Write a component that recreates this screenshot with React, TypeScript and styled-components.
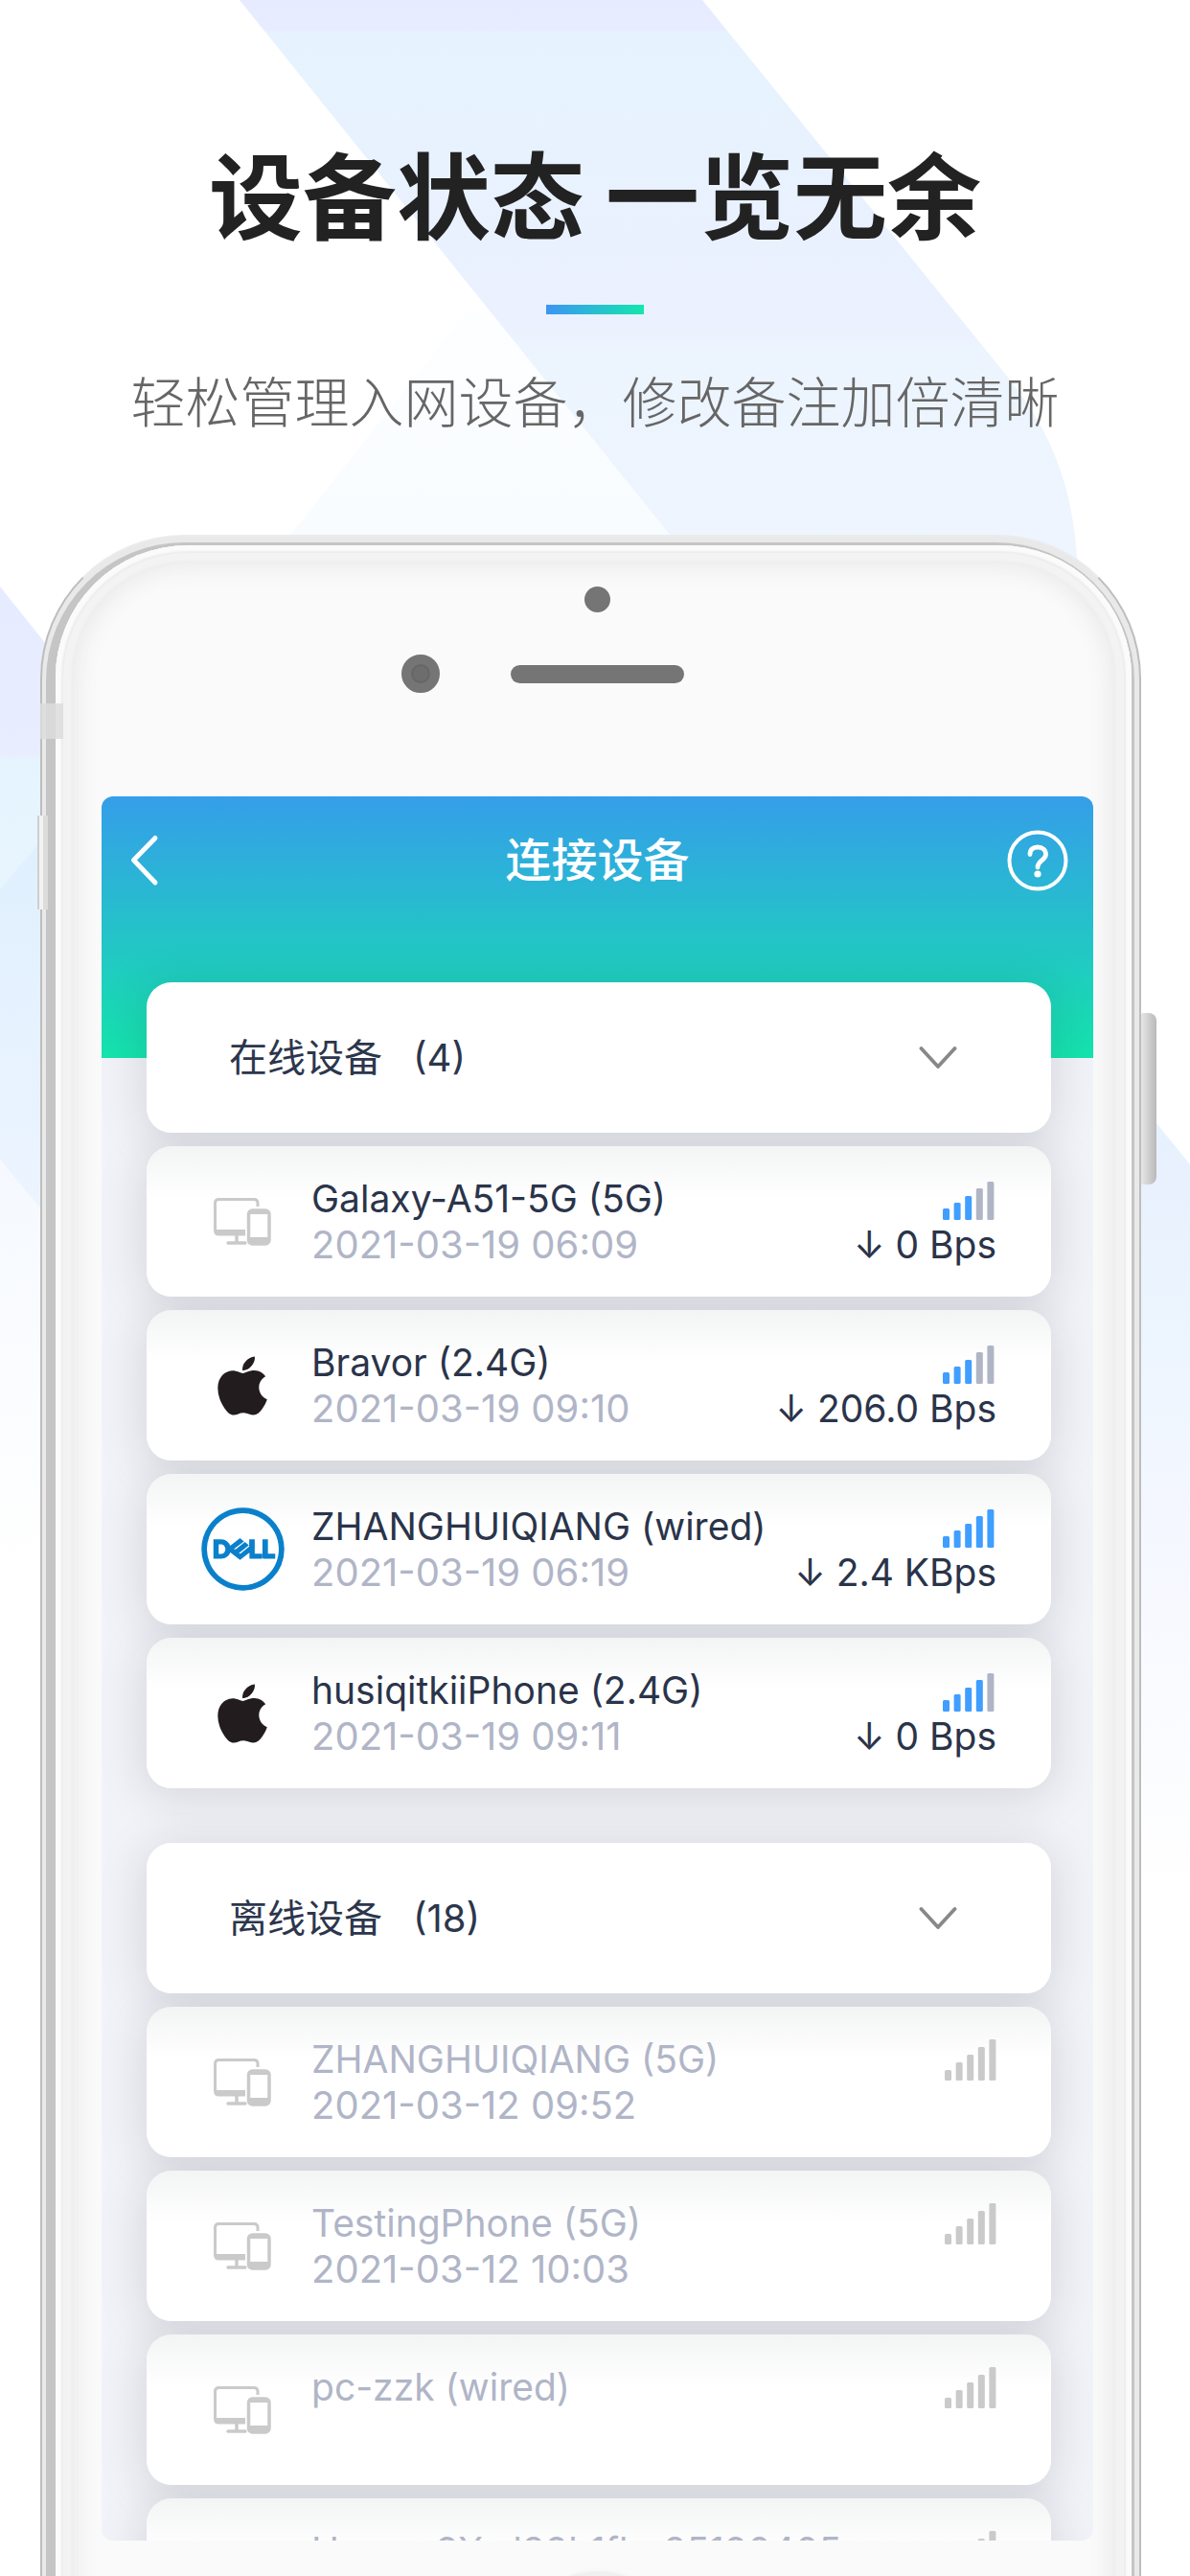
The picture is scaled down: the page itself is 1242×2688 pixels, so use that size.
import React, { useState } from "react";
import styled, { createGlobalStyle } from "styled-components";
import { FaApple } from "react-icons/fa";
import { SiDell, SiHuawei } from "react-icons/si";

const GlobalStyle = createGlobalStyle`
  * { box-sizing: border-box; }
  body { margin: 0; background: #fff; }
  button { border: 0; padding: 0; background: none; font: inherit; color: inherit; cursor: pointer; }
`;

const Page = styled.main`
  position: relative;
  isolation: isolate;
  display: flex;
  flex-direction: column;
  height: 100vh;
  overflow: hidden;
  font-family: Inter, "Noto Sans CJK SC", sans-serif;
`;

const Backdrop = styled.svg`
  position: absolute;
  inset: 0;
  width: 100%;
  height: 100%;
  z-index: -1;
`;

const Intro = styled.header`
  display: flex;
  flex-direction: column;
  align-items: center;
  padding: 127px 24px 101px;
  font-family: "Noto Sans CJK SC", sans-serif;
  text-align: center;
`;

const Headline = styled.h1`
  margin: 0;
  font-size: 98px;
  line-height: 144px;
  font-weight: 700;
  color: #222;
`;

const Accent = styled.div`
  width: 102px;
  height: 10px;
  margin: 47px 0;
  background: linear-gradient(90deg, #3d95f2, #14e6ae);
`;

const Tagline = styled.p`
  margin: 0;
  font-size: 57px;
  line-height: 82px;
  font-weight: 300;
  color: #666;
`;

const Phone = styled.section`
  position: relative;
  flex: 1;
  min-height: 0;
  display: flex;
  margin: 0 51px -200px 42px;
  padding: 6px 5px 0 4px;
  border: 2px solid #bdbdbd;
  border-top-color: #ebebeb;
  border-radius: 150px 150px 0 0;
  background: #e9e9e9;
`;

const Rim = styled.div`
  flex: 1;
  min-width: 0;
  display: flex;
  padding: 3px 3px 0 10px;
  border-radius: 144px 144px 0 0;
  background: #c5c5c5;
`;

const Face = styled.div`
  flex: 1;
  min-width: 0;
  display: flex;
  flex-direction: column;
  padding: 43px 40px 0 48px;
  border-radius: 138px 138px 0 0;
  background: #fafafa;
  box-shadow: inset 0 0 2px 6px #fbfbfb, inset 0 0 0 8px #ececec,
    inset 0 0 2px 16px #f3f3f3, inset 0 0 24px 22px #e9e9e9;
`;

const AntennaBand = styled.span`
  position: absolute;
  top: 174px;
  left: -2px;
  width: 24px;
  height: 37px;
  background: rgba(220, 220, 220, 0.85);
`;

const VolumeKey = styled.span`
  position: absolute;
  top: 291px;
  left: -5px;
  width: 11px;
  height: 98px;
  border-left: 2px solid #cfcfcf;
  background: linear-gradient(90deg, #f2f2f2 40%, #dcdcdc 50%);
`;

const PowerKey = styled.span`
  position: absolute;
  top: 497px;
  right: -18px;
  width: 16px;
  height: 179px;
  border-radius: 2px 8px 8px 2px;
  background: linear-gradient(90deg, #e6e6e6, #b9b9b9);
`;

const ProximityDot = styled.span`
  align-self: center;
  width: 27px;
  height: 27px;
  border-radius: 50%;
  background: #757575;
`;

const EarpieceRow = styled.div`
  display: grid;
  grid-template-columns: 1fr 181px 1fr;
  align-items: center;
  column-gap: 74px;
  margin: 44px 0 108px;
`;

const Camera = styled.span`
  justify-self: end;
  width: 40px;
  height: 40px;
  border: 10px solid #757575;
  border-radius: 50%;
  background: #6d6d6d;
  box-shadow: inset 0 0 0 2px #666;
`;

const Speaker = styled.span`
  height: 19px;
  border-radius: 10px;
  background: #757575;
`;

const Screen = styled.div`
  flex: 1;
  min-height: 0;
  overflow: hidden;
  border-radius: 12px;
  background: linear-gradient(#359ee9, #15e4ac) top / 100% 273px no-repeat, #f2f3f8;
`;

const NavBar = styled.nav`
  display: grid;
  grid-template-columns: 64px 1fr 64px;
  align-items: center;
  height: 134px;
  padding: 0 26px;
  color: #fff;
`;

const NavTitle = styled.h2`
  margin: 0;
  font-size: 48px;
  line-height: 72px;
  font-weight: 500;
  text-align: center;
`;

const NavButton = styled.button`
  display: flex;
  width: 64px;
  height: 64px;
`;

const Groups = styled.div`
  position: relative;
  z-index: 0;
  display: flex;
  flex-direction: column;
  gap: 57px;
  padding: 60px 44px 0 47px;
`;

const Group = styled.section`
  display: flex;
  flex-direction: column;
  gap: 14px;
`;

const DeviceList = styled.ul`
  display: flex;
  flex-direction: column;
  gap: 14px;
  margin: 0;
  padding: 0;
  list-style: none;
`;

const cardShadow = `
  position: relative;
  border-radius: 26px;
  &::before {
    content: "";
    position: absolute;
    inset: 0;
    z-index: -1;
    border-radius: 26px;
    box-shadow: 0 6px 48px 4px rgba(25, 28, 45, 0.13);
  }
`;

const GroupHeader = styled.button`
  ${cardShadow}
  && {
    display: flex;
    align-items: center;
    height: 157px;
    padding: 0 98px 0 86px;
    background: #fff;
    color: #2c364c;
    text-align: left;
  }
`;

const GroupName = styled.span`
  font-size: 40px;
  line-height: 48px;
`;

const GroupCount = styled.span`
  flex: 1;
  margin-left: 32px;
  font-size: 40px;
  line-height: 48px;
`;

const DeviceCard = styled.li`
  ${cardShadow}
  display: grid;
  grid-template-columns: 100px 1fr auto;
  column-gap: 22px;
  height: 157px;
  padding: 0 57px 0 50px;
  background: linear-gradient(#f3f4f4, #fff 54px);
`;

const IconSlot = styled.div`
  display: flex;
  align-items: center;
  justify-content: center;
`;

const Lines = styled.div`
  display: flex;
  flex-direction: column;
  padding-top: 31px;
  font-size: 39px;
  line-height: 48px;
  white-space: nowrap;
`;

const RateLines = styled(Lines)`
  align-items: flex-end;
`;

const DeviceName = styled.span<{ $offline: boolean }>`
  color: ${(p) => (p.$offline ? "#b0b5c7" : "#2a344a")};
`;

const LastSeen = styled.time`
  font-size: 40px;
  color: #b0b5c7;
`;

const Rate = styled.span`
  color: #2a344a;
`;

const SignalBox = styled.div<{ $offline: boolean }>`
  display: flex;
  align-items: center;
  height: 48px;
  padding-right: ${(p) => (p.$offline ? 0 : 2)}px;
`;

const HomeArea = styled.div`
  display: flex;
  justify-content: center;
  height: 235px;
  flex: none;
  padding-top: 32px;
`;

const HomeKey = styled.span`
  width: 160px;
  height: 160px;
  border-radius: 50%;
  background: #f0f0f0;
  box-shadow: 0 0 4px #f0f0f0;
`;

function DevicesIcon() {
  return (
    <svg width="60" height="50" viewBox="0 0 60 50" fill="none" aria-hidden="true">
      <path d="M46 9V5.500Q46 1.500 42 1.500H5.500Q1.500 1.500 1.500 5.500V34Q1.500 38 5.500 38H33" stroke="#cacaca" strokeWidth="3" />
      <path d="M1.500 33H33V38.500H5Q1.500 38.500 1.500 35Z" fill="#cacaca" />
      <path d="M24 38V46M15 47H33" stroke="#cacaca" strokeWidth="3.500" strokeLinecap="round" />
      <rect x="36.500" y="13" width="21.500" height="35" rx="4" stroke="#cacaca" strokeWidth="3.500" />
      <path d="M36 13H58V17H36ZM36 41H58V48H36Z" fill="#cacaca" />
    </svg>
  );
}

function SignalIcon({ level, offline }: { level: number; offline: boolean }) {
  const heights = offline ? [11, 19, 27, 35, 43] : [12, 18, 25, 33, 40];
  return (
    <svg width="54" height="43" viewBox="0 0 54 43" role="img" aria-label={`信号 ${level}/5`}>
      {heights.map((h, i) => (
        <rect
          key={h}
          x={i * 11.6}
          y={43 - h}
          width="7"
          height={h}
          rx="1.500"
          fill={offline ? "#cacaca" : i < level ? "#409eff" : "#b0b5c6"}
        />
      ))}
    </svg>
  );
}

function Chevron() {
  return (
    <svg width="40" height="26" viewBox="0 0 40 26" fill="none" aria-hidden="true">
      <path d="M2.500 3L20 22L37.500 3" stroke="#888" strokeWidth="3.800" strokeLinecap="round" strokeLinejoin="round" />
    </svg>
  );
}

type Brand = "generic" | "apple" | "dell" | "huawei";

interface Device {
  name: string;
  brand: Brand;
  seen?: string;
  rate?: string;
  level: number;
}

const brandIcons: Record<Brand, React.ReactNode> = {
  generic: <DevicesIcon />,
  apple: <FaApple size={70} color="#231c1f" />,
  dell: <SiDell size={85} color="#0a80cb" stroke="#0a80cb" strokeWidth={0.4} overflow="visible" />,
  huawei: <SiHuawei size={76} color="#e23a45" />,
};

const online: Device[] = [
  { name: "Galaxy-A51-5G (5G)", brand: "generic", seen: "2021-03-19 06:09", rate: "0 Bps", level: 3 },
  { name: "Bravor (2.4G)", brand: "apple", seen: "2021-03-19 09:10", rate: "206.0 Bps", level: 3 },
  { name: "ZHANGHUIQIANG (wired)", brand: "dell", seen: "2021-03-19 06:19", rate: "2.4 KBps", level: 5 },
  { name: "husiqitkiiPhone (2.4G)", brand: "apple", seen: "2021-03-19 09:11", rate: "0 Bps", level: 4 },
];

const offline: Device[] = [
  { name: "ZHANGHUIQIANG (5G)", brand: "generic", seen: "2021-03-12 09:52", level: 5 },
  { name: "TestingPhone (5G)", brand: "generic", seen: "2021-03-12 10:03", level: 5 },
  { name: "pc-zzk (wired)", brand: "generic", level: 5 },
  { name: "Honor-9X-d89b1fbe25190405", brand: "huawei", level: 5 },
];

function DeviceGroup({ title, count, devices, isOffline = false }: {
  title: string;
  count: number;
  devices: Device[];
  isOffline?: boolean;
}) {
  const [open, setOpen] = useState(true);
  return (
    <Group>
      <GroupHeader type="button" aria-expanded={open} onClick={() => setOpen(!open)}>
        <GroupName>{title}</GroupName>
        <GroupCount>({count})</GroupCount>
        <Chevron />
      </GroupHeader>
      {open && (
        <DeviceList>
          {devices.map((d) => (
            <DeviceCard key={d.name}>
              <IconSlot>{brandIcons[d.brand]}</IconSlot>
              <Lines>
                <DeviceName $offline={isOffline}>{d.name}</DeviceName>
                {d.seen && <LastSeen>{d.seen}</LastSeen>}
              </Lines>
              <RateLines>
                <SignalBox $offline={isOffline}>
                  <SignalIcon level={d.level} offline={isOffline} />
                </SignalBox>
                {d.rate && <Rate>↓ {d.rate}</Rate>}
              </RateLines>
            </DeviceCard>
          ))}
        </DeviceList>
      )}
    </Group>
  );
}

function BackdropArt() {
  return (
    <Backdrop viewBox="0 0 1242 2688" preserveAspectRatio="xMidYMin slice" aria-hidden="true">
      <defs>
        <linearGradient id="band" gradientUnits="userSpaceOnUse" x1="0" y1="0" x2="0" y2="600">
          <stop offset="0" stopColor="#e7ebff" />
          <stop offset="0.052" stopColor="#e8ecff" />
          <stop offset="0.058" stopColor="#e6f3fe" />
          <stop offset="0.230" stopColor="#e7f2fe" />
          <stop offset="0.420" stopColor="#eaf1fe" />
          <stop offset="0.570" stopColor="#ebf1fe" />
          <stop offset="0.600" stopColor="#ecf4fe" />
          <stop offset="1" stopColor="#eef5ff" />
        </linearGradient>
        <linearGradient id="wedge" gradientUnits="userSpaceOnUse" x1="0" y1="320" x2="0" y2="560">
          <stop offset="0" stopColor="#fdfeff" />
          <stop offset="1" stopColor="#f8fcff" />
        </linearGradient>
        <linearGradient id="leftTop" gradientUnits="userSpaceOnUse" x1="0" y1="612" x2="0" y2="940">
          <stop offset="0" stopColor="#e6ecff" />
          <stop offset="0.530" stopColor="#e8edff" />
          <stop offset="0.550" stopColor="#e5f4fe" />
          <stop offset="1" stopColor="#e8f5ff" />
        </linearGradient>
        <linearGradient id="leftMid" gradientUnits="userSpaceOnUse" x1="0" y1="880" x2="0" y2="1260">
          <stop offset="0" stopColor="#e0f0fe" />
          <stop offset="1" stopColor="#ecf4ff" />
        </linearGradient>
        <linearGradient id="leftLow" gradientUnits="userSpaceOnUse" x1="0" y1="1210" x2="0" y2="1640">
          <stop offset="0" stopColor="#f5f9ff" />
          <stop offset="1" stopColor="#ffffff" />
        </linearGradient>
        <linearGradient id="right" gradientUnits="userSpaceOnUse" x1="0" y1="1170" x2="0" y2="1980">
          <stop offset="0" stopColor="#e5f3fe" />
          <stop offset="0.060" stopColor="#e9f0fe" />
          <stop offset="0.250" stopColor="#ecf5fe" />
          <stop offset="0.500" stopColor="#f4f7ff" />
          <stop offset="1" stopColor="#ffffff" />
        </linearGradient>
      </defs>
      <path d="M487 325L290 575H720L520 325Z" fill="url(#wedge)" />
      <path d="M250 0H733L1053 395C1098 452 1122 510 1125 600H733Z" fill="url(#band)" />
      <path d="M0 612L60 687V940H0Z" fill="url(#leftTop)" />
      <path d="M0 928L60 857V1290L0 1210Z" fill="url(#leftMid)" />
      <path d="M0 1210L60 1282V1640H0Z" fill="url(#leftLow)" />
      <path d="M1180 1139L1242 1215V1980H1180Z" fill="url(#right)" />
    </Backdrop>
  );
}

export default function App() {
  return (
    <Page lang="zh-CN">
      <GlobalStyle />
      <BackdropArt />
      <Intro>
        <Headline>设备状态 一览无余</Headline>
        <Accent />
        <Tagline>轻松管理入网设备，修改备注加倍清晰</Tagline>
      </Intro>
      <Phone>
        <Rim>
          <Face>
            <ProximityDot />
            <EarpieceRow>
              <Camera />
              <Speaker />
            </EarpieceRow>
            <Screen>
              <NavBar>
                <NavButton type="button" aria-label="返回">
                  <svg width="64" height="64" viewBox="0 0 64 64" fill="none" aria-hidden="true">
                    <path d="M30 8.500L7.500 31.500L30 55" stroke="#fff" strokeWidth="5" strokeLinecap="round" strokeLinejoin="round" />
                  </svg>
                </NavButton>
                <NavTitle>连接设备</NavTitle>
                <NavButton type="button" aria-label="帮助">
                  <svg width="64" height="64" viewBox="0 0 64 64" fill="none" aria-hidden="true">
                    <circle cx="32" cy="32" r="29.500" stroke="#fff" strokeWidth="4" />
                    <path d="M24 25.500C24 20.500 27 18 32 18S40.500 21 40.500 25.500C40.500 31.500 32 32 32 39" stroke="#fff" strokeWidth="4.800" strokeLinecap="round" />
                    <circle cx="32" cy="46" r="3.600" fill="#fff" />
                  </svg>
                </NavButton>
              </NavBar>
              <Groups>
                <DeviceGroup title="在线设备" count={4} devices={online} />
                <DeviceGroup title="离线设备" count={18} devices={offline} isOffline />
              </Groups>
            </Screen>
            <HomeArea>
              <HomeKey />
            </HomeArea>
          </Face>
        </Rim>
        <AntennaBand />
        <VolumeKey />
        <PowerKey />
      </Phone>
    </Page>
  );
}
